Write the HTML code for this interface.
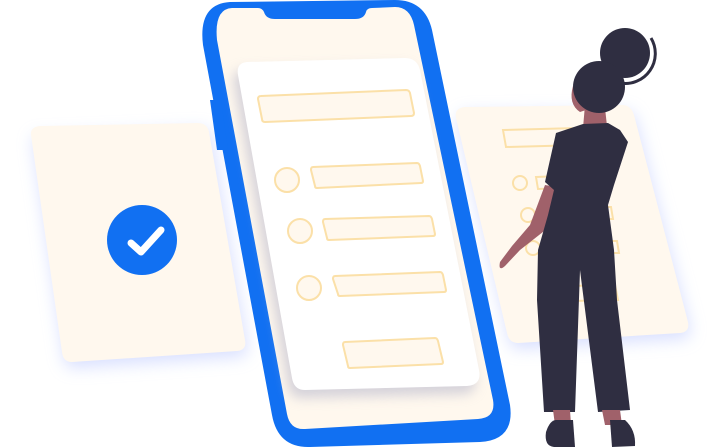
<!DOCTYPE html>
<html><head><meta charset="utf-8"><style>html,body{margin:0;padding:0;background:#fff;width:720px;height:448px;overflow:hidden}</style></head>
<body>
<svg width="720" height="448" viewBox="0 0 720 448" xmlns="http://www.w3.org/2000/svg">
<defs>
<filter id="glow" x="-30%" y="-30%" width="160%" height="160%"><feGaussianBlur stdDeviation="8"/></filter>
<filter id="sh" x="-30%" y="-30%" width="160%" height="160%"><feGaussianBlur stdDeviation="6"/></filter>
</defs>
<!-- left card -->
<path d="M40,130 L200,123 Q208,123 210,132 L245,340 Q247,350 237,351 L72,362 Q63,362 62,352 L31,135 Q31,127 40,130 Z" fill="#c9d3ff" opacity="0.7" filter="url(#glow)" transform="translate(2,6)"/>
<path d="M40,126 L198,123 Q207,123 209,132 L245,340 Q247,350 237,351 L72,362 Q63,362 62,352 L31,135 Q30,127 40,126 Z" fill="#fff8ee"/>
<circle cx="142" cy="240" r="35" fill="#1170f2"/>
<path d="M131,243 L141,252 L161,230" stroke="#fff" stroke-width="7" fill="none" stroke-linecap="round" stroke-linejoin="round"/>
<!-- right card -->
<path d="M465,107 L622,105 Q631,105 634,115 L688,322 Q690,332 680,333 L518,343 Q509,343 507,333 L456,118 Q454,108 465,107 Z" fill="#c9d3ff" opacity="0.7" filter="url(#glow)" transform="translate(2,6)"/>
<path d="M465,107 L622,105 Q631,105 634,115 L688,322 Q690,332 680,333 L518,343 Q509,343 507,333 L456,118 Q454,108 465,107 Z" fill="#fff8ee"/>
<g fill="none" stroke="#fbe0a8" stroke-width="2">
<path d="M503,130 L578,128 L581,145 L506,147 Z"/>
<circle cx="520" cy="183" r="7"/><path d="M536,177 L560,176 L562,188 L538,189 Z"/>
<circle cx="528" cy="215" r="7"/><path d="M600,207 L611,207 L613,219 L602,219 Z"/>
<circle cx="533" cy="248" r="7"/><path d="M607,241 L617,241 L619,253 L609,253 Z"/>
<path d="M570,286 L615,285 L618,300 L572,301 Z"/>
</g>
<!-- phone -->
<path d="M230,2 L395,0 Q425,0 432,30 L510,405 Q515,440 480,442 L310,447 Q278,448 272,415 L203,45 Q198,4 230,2 Z" fill="#1170f2"/>
<path d="M210,100 L221,100 L228,150 L217,150 Z" fill="#1170f2"/>
<path d="M232,8 L258,8 Q262,8 264,12 Q266,19 275,19 L355,19 Q364,19 366,12 Q367,8 372,8 L395,7 Q410,7 414,25 L493,400 Q496,418 478,419 L305,429 Q290,430 287,414 L217,40 Q214,9 232,8 Z" fill="#fff8ee"/>
<path d="M247,62 L405,58 Q417,58 420,70 L479,370 Q482,385 467,386 L305,390 Q294,390 292,378 L238,75 Q236,63 247,62 Z" fill="#b8b8cc" opacity="0.6" filter="url(#sh)" transform="translate(-4,8)"/>
<path d="M247,62 L405,58 Q417,58 420,70 L479,370 Q482,385 467,386 L305,390 Q294,390 292,378 L238,75 Q236,63 247,62 Z" fill="#fff"/>
<g fill="#fff8ee" stroke="#fbe0a8" stroke-width="2">
<path d="M261,96 L406,90 Q409,90 410,93 L414,113 Q414,116 411,116 L265,122 Q262,122 262,119 L258,99 Q258,96 261,96 Z"/>
<circle cx="287" cy="180" r="12"/>
<path d="M313,167 L417,163 Q419,163 420,166 L423,181 Q423,183 421,183 L317,188 Q315,188 315,186 L311,170 Q311,167 313,167 Z"/>
<circle cx="300" cy="231" r="12"/>
<path d="M325,219 L429,216 Q431,216 432,219 L435,234 Q435,236 433,236 L329,240 Q327,240 327,238 L323,222 Q323,219 325,219 Z"/>
<circle cx="309" cy="288" r="12"/>
<path d="M335,276 L440,272 Q442,272 443,275 L446,290 Q446,292 444,292 L340,296 Q338,296 338,294 L333,279 Q333,276 335,276 Z"/>
<path d="M345,342 L435,338 Q437,338 438,341 L443,362 Q443,364 441,364 L350,368 Q348,368 348,366 L343,345 Q343,342 345,342 Z"/>
</g>
<!-- woman -->
<path d="M651,38 A30,30 0 0 1 620,83" fill="none" stroke="#2f2e41" stroke-width="3"/>
<circle cx="625" cy="53" r="25" fill="#2f2e41"/>
<path d="M585,105 L583,128 L607,126 L605,108 Z" fill="#a0616a"/>
<path d="M573,86 Q568,104 580,112 L592,108 Z" fill="#a0616a"/>
<circle cx="599" cy="87" r="26" fill="#2f2e41"/>
<path d="M562,188 L548,228 L520,250 L505,266 Q498,272 500,262 L512,246 L530,225 L545,185 Z" fill="#a0616a"/>
<path d="M556,133 L583,124 L608,123 L620,130 L628,142 L614,185 L608,205 L614,250 L617,300 L630,410 L598,412 L580,270 L575,412 L544,412 L537,300 L538,250 L548,215 L554,190 L545,182 Z" fill="#2f2e41"/>
<path d="M553,410 L570,410 L571,425 L555,425 Z M602,410 L620,410 L622,425 L605,425 Z" fill="#a0616a"/>
<path d="M556,420 Q550,420 546,432 Q544,446 554,447 L575,447 L573,420 Z" fill="#2f2e41"/>
<path d="M610,420 L625,420 Q636,430 635,446 L612,447 Z" fill="#2f2e41"/>
</svg>
</body></html>
